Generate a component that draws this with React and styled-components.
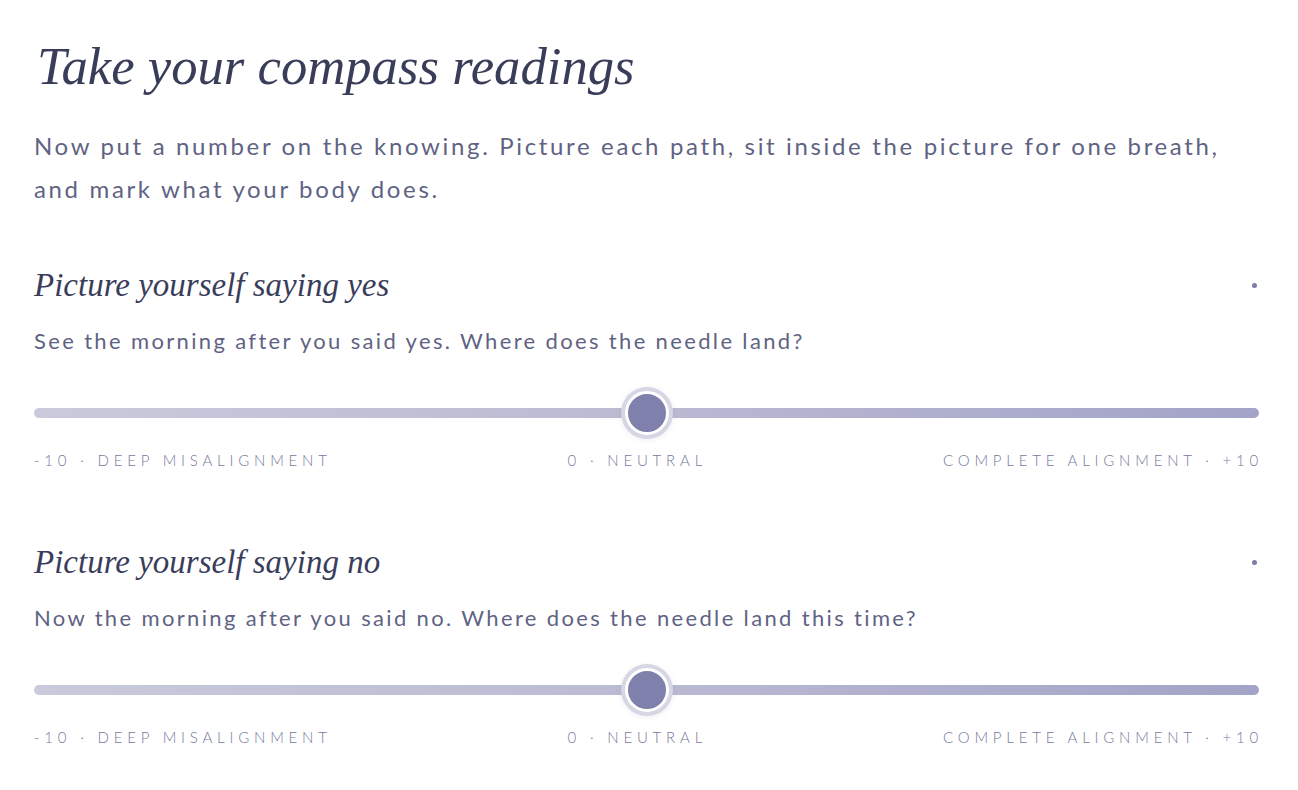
import React, { useState } from "react";
import styled, { createGlobalStyle } from "styled-components";

const Global = createGlobalStyle`
  html, body { margin: 0; padding: 0; background: #ffffff; }
  body { font-family: "Lato", "Noto Sans", sans-serif; color: #5c6080; }
`;

const Page = styled.main`
  width: 1225px;
  padding: 36px 0 0 34px;
  display: flex;
  flex-direction: column;
`;

const Title = styled.h1`
  margin: 0 0 0 3px;
  font-family: "Liberation Serif", serif;
  font-style: italic;
  font-weight: 400;
  font-size: 52.7px;
  line-height: 60px;
  color: #3a3d5a;
`;

const Lead = styled.p`
  margin: 28px 0 0;
  font-size: 24px;
  font-weight: 400;
  line-height: 43px;
  letter-spacing: 2.65px;
  color: #5f6383;
`;

const Reading = styled.section`
  margin-top: ${(p) => p.$gap}px;
  display: flex;
  flex-direction: column;
`;

const ReadingHead = styled.div`
  display: flex;
  align-items: center;
  justify-content: space-between;
`;

const ReadingTitle = styled.h2`
  margin: 0;
  font-family: "Liberation Serif", serif;
  font-style: italic;
  font-weight: 400;
  font-size: 33px;
  line-height: 40px;
  color: #3a3d5a;
`;

const Dot = styled.span`
  width: 5px;
  height: 5px;
  border-radius: 50%;
  background: #7b7fa8;
  margin-right: 2px;
`;

const Prompt = styled.p`
  margin: 21px 0 0;
  font-size: 22px;
  font-weight: 400;
  line-height: 30px;
  letter-spacing: 2.35px;
  color: #5f6383;
`;

const Track = styled.div`
  position: relative;
  margin-top: 52px;
  height: 10px;
  border-radius: 5px;
  background: linear-gradient(90deg, #c9cadb 0%, #babad3 50%, #a3a3c8 100%);
`;

const Thumb = styled.span`
  position: absolute;
  top: 50%;
  width: 44px;
  height: 44px;
  border-radius: 50%;
  transform: translate(-50%, -50%);
  background: #7f80ab;
  border: 3px solid #ffffff;
  box-sizing: border-box;
  box-shadow: 0 0 0 4px #d6d6e5, 0 1px 6px 3px rgba(110, 110, 160, 0.16);
`;

const Scale = styled.div`
  margin-top: 32px;
  display: flex;
  justify-content: space-between;
  font-size: 15px;
  font-weight: 300;
  line-height: 20px;
  letter-spacing: 4.8px;
  text-transform: uppercase;
  color: #767a9c;
`;

const ScaleMark = styled.span`
  margin-right: ${(p) => (p.$last ? "-4px" : "0")};
`;

const readings = [
  {
    id: "yes",
    title: "Picture yourself saying yes",
    prompt: "See the morning after you said yes. Where does the needle land?",
    gap: 55,
  },
  {
    id: "no",
    title: "Picture yourself saying no",
    prompt: "Now the morning after you said no. Where does the needle land this time?",
    gap: 72,
  },
];

function Needle({ value }) {
  const pct = ((value + 10) / 20) * 100;
  return (
    <Track>
      <Thumb style={{ left: `${pct}%` }} />
    </Track>
  );
}

export default function App() {
  const [values] = useState({ yes: 0, no: 0 });
  return (
    <Page>
      <Global />
      <Title>Take your compass readings</Title>
      <Lead>
        Now put a number on the knowing. Picture each path, sit inside the picture for one breath,
        and mark what your body does.
      </Lead>
      {readings.map((r) => (
        <Reading key={r.id} $gap={r.gap}>
          <ReadingHead>
            <ReadingTitle>{r.title}</ReadingTitle>
            <Dot />
          </ReadingHead>
          <Prompt>{r.prompt}</Prompt>
          <Needle value={values[r.id]} />
          <Scale>
            <ScaleMark>-10 · Deep misalignment</ScaleMark>
            <ScaleMark>0 · Neutral</ScaleMark>
            <ScaleMark $last>Complete alignment · +10</ScaleMark>
          </Scale>
        </Reading>
      ))}
    </Page>
  );
}
